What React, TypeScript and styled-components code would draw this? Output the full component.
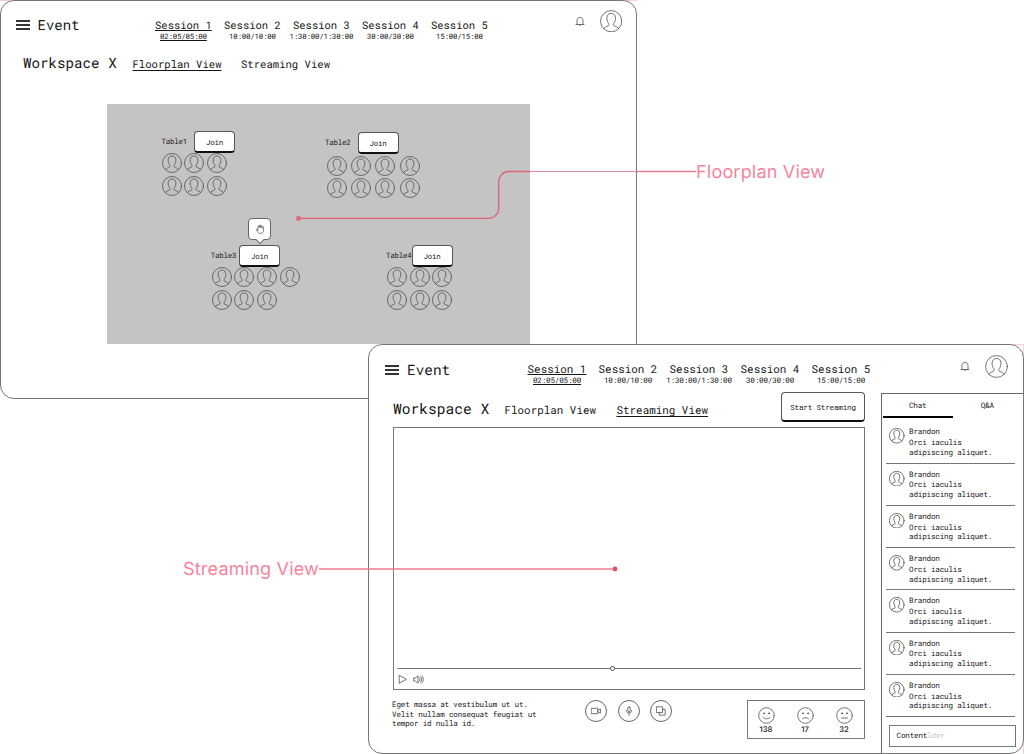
import React from "react";
import styled, { createGlobalStyle } from "styled-components";

const sessions = [
  { name: "Session 1", time: "02:05/05:00" },
  { name: "Session 2", time: "10:00/10:00" },
  { name: "Session 3", time: "1:30:00/1:30:00" },
  { name: "Session 4", time: "30:00/30:00" },
  { name: "Session 5", time: "15:00/15:00" },
];

const tables = [
  { name: "Table1", x: 54.5, y: 27, join: 7, people: [3, 3], gap: 2.7, rowGap: 3, top: 0, left: 0 },
  { name: "Table2", x: 218, y: 27.5, join: 7, people: [4, 4], gap: 4.4, rowGap: 2.2, top: 2, left: 1.5 },
  { name: "Table3", x: 103.7, y: 141, join: 2.8, people: [4, 3], gap: 2.7, rowGap: 3, top: 0, left: 1, hand: true },
  { name: "Table4", x: 279, y: 141, join: 0, people: [3, 3], gap: 2.7, rowGap: 3, top: 0, left: 1 },
];

const messages = [1, 2, 3, 4, 5, 6, 7];

function Avatar({ size }: { size: number }) {
  return (
    <Icon width={size} height={size} viewBox="0 0 24 24" strokeWidth={19 / size}>
      <circle cx="12" cy="12" r="11.4" />
      <path d="M3.9 20c1-1.7 3.300-2.200 5-3 1.200-.6.9-1.700.2-2.800-1.200-1.800-1.900-3.700-1.700-6C7.600 5.100 9.500 3.600 12 3.600s4.400 1.500 4.600 4.600c.2 2.300-.5 4.200-1.700 6-.7 1.100-1 2.200.2 2.800 1.700.8 4 1.300 5 3" />
    </Icon>
  );
}

function Header({ big }: { big?: boolean }) {
  return (
    <HeaderBar $big={big}>
      <Burger>
        <i />
        <i />
        <i />
      </Burger>
      <EventTitle $big={big}>Event</EventTitle>
      <SessionList $big={big}>
        {sessions.map((session, idx) => (
          <Session key={session.name} $active={idx === 0} $big={big}>
            <span>{session.name}</span>
            <small>{session.time}</small>
          </Session>
        ))}
      </SessionList>
      <BellBox>
        <Icon width="10" height="11" viewBox="0 0 10 11" strokeWidth="0.8">
          <path d="M1 8.500h8M2 8.300V4.600C2 2.700 3.200 1.300 5 1.300s3 1.400 3 3.300v3.700M4 8.800c.2 1 1.800 1 2 0" />
        </Icon>
      </BellBox>
      <Avatar size={big ? 23 : 22.4} />
    </HeaderBar>
  );
}

function FloorplanFrame() {
  return (
    <FloorFrame>
      <Header />
      <Views>
        <Workspace>Workspace X</Workspace>
        <View $active>Floorplan View</View>
        <View>Streaming View</View>
      </Views>
      <Floor>
        {tables.map((table) => (
          <Table key={table.name} style={{ left: table.x, top: table.y }}>
            <TableHead $gap={table.join}>
              {table.name}
              <Join>
                Join
                {table.hand && (
                  <HandBubble>
                    <Icon width="10" height="10" viewBox="0 0 24 24" strokeWidth="1.8">
                      <path d="M7 14.500V6.300a1.700 1.700 0 0 1 3.400 0V4.200a1.700 1.700 0 0 1 3.400 0v1.600a1.700 1.700 0 0 1 3.400 0v2.400a1.700 1.700 0 0 1 3.400 0V15c0 5-2.800 7.500-7.300 7.500-4 0-5.800-1.500-7.600-4.500L3.200 14.200c-.7-1.500 1-2.500 2.100-1.600L7 14.500M10.400 6.300v2.200M13.800 5.800v2.700M17.200 8.200v1.600" />
                    </Icon>
                  </HandBubble>
                )}
              </Join>
            </TableHead>
            <Seats style={{ gap: table.rowGap, marginTop: table.top, marginLeft: table.left }}>
              {table.people.map((count, row) => (
                <SeatRow key={row} style={{ gap: table.gap }}>
                  {Array.from({ length: count }, (_, i) => (
                    <Avatar key={i} size={20} />
                  ))}
                </SeatRow>
              ))}
            </Seats>
          </Table>
        ))}
      </Floor>
    </FloorFrame>
  );
}

function Face({ mouth, count }: { mouth: string; count: number }) {
  return (
    <Reaction>
      <Icon width="17" height="17" viewBox="0 0 17 17" strokeWidth="0.8">
        <circle cx="8.500" cy="8.500" r="7.800" />
        <path d={mouth} />
        <circle cx="6" cy="6.300" r="0.500" fill="#222" />
        <circle cx="11" cy="6.300" r="0.500" fill="#222" />
      </Icon>
      {count}
    </Reaction>
  );
}

function Chat() {
  return (
    <ChatPanel>
      <Tabs>
        <Tab $active>Chat</Tab>
        <Tab>Q&amp;A</Tab>
      </Tabs>
      {messages.map((id) => (
        <Message key={id}>
          <Avatar size={15.5} />
          <div>
            <Name>Brandon</Name>
            <p>
              Orci iaculis
              <br />
              adipiscing aliquet.
            </p>
          </div>
        </Message>
      ))}
      <ChatInput>
        Content<em>lder</em>
      </ChatInput>
    </ChatPanel>
  );
}

function StreamingFrame() {
  return (
    <StreamFrame>
      <Header big />
      <StreamBody>
        <Main>
          <StreamViews>
            <Workspace $big>Workspace X</Workspace>
            <View $big>Floorplan View</View>
            <View $big $active>
              Streaming View
            </View>
            <StartButton>Start Streaming</StartButton>
          </StreamViews>
          <Player>
            <Track>
              <Knob />
            </Track>
            <Controls>
              <Icon width="9" height="9" viewBox="0 0 9 9" strokeWidth="0.8">
                <path d="M1.200.7v7.600L8 4.500z" />
              </Icon>
              <Icon width="11" height="9" viewBox="0 0 11 9" strokeWidth="0.8">
                <path d="M.7 3v3h1.600L5 8.200V.8L2.300 3zM6.500 2.800c.8 1 .8 2.400 0 3.400M7.700 1.800c1.400 1.600 1.400 3.800 0 5.400M9 .9c1.900 2.200 1.900 5 0 7.200" />
              </Icon>
            </Controls>
          </Player>
          <Footer>
            <Description>
              Eget massa at vestibulum ut ut.
              <br />
              Velit nullam consequat feugiat ut
              <br />
              tempor id nulla id.
            </Description>
            <Devices>
              <RoundButton>
                <Icon width="10" height="10" viewBox="0 0 10 10" strokeWidth="0.8">
                  <path d="M.6 2.300h6.200v5.400H.6zM6.800 4.200l2.600-1.400v4.400L6.800 5.800" />
                </Icon>
              </RoundButton>
              <RoundButton>
                <Icon width="10" height="10" viewBox="0 0 10 10" strokeWidth="0.8">
                  <rect x="3.800" y="0.800" width="2.400" height="5" rx="1.200" />
                  <path d="M2.300 4.500c0 3.500 5.400 3.500 5.400 0M5 7.200v2.200" />
                </Icon>
              </RoundButton>
              <RoundButton>
                <Icon width="10" height="10" viewBox="0 0 10 10" strokeWidth="0.8">
                  <path d="M.8.8h5.800v5.800H.8zM6.600 3.300h2.600v5.900H3.300V6.600" />
                </Icon>
              </RoundButton>
            </Devices>
            <Reactions>
              <Face mouth="M5 10.200c1.200 2.200 5.800 2.200 7 0" count={138} />
              <Face mouth="M5.500 11.800c1.500-1.500 4.500-1.500 6 0" count={17} />
              <Face mouth="M5.500 11h6" count={32} />
            </Reactions>
          </Footer>
        </Main>
        <Chat />
      </StreamBody>
    </StreamFrame>
  );
}

function App() {
  return (
    <>
      <GlobalStyle />
      <Board>
        <FloorplanFrame />
        <StreamingFrame />
        <FloorNote>
          <svg width="401" height="54" viewBox="0 0 401 54" fill="none">
            <path d="M3.500 48.300H193.700a10 10 0 0 0 10-10V11.500a10 10 0 0 1 10-10H235" stroke="#df6279" strokeWidth="1.300" />
            <path d="M235 1.500H342" stroke="#e28a9b" />
            <path d="M342 1.500H401" stroke="#f07a93" strokeWidth="1.300" />
            <circle cx="3.500" cy="48.300" r="2.600" fill="#df6e83" />
          </svg>
          <NoteText>Floorplan View</NoteText>
        </FloorNote>
        <StreamNote>
          <NoteText>Streaming View</NoteText>
          <svg width="300" height="6" viewBox="0 0 300 6" fill="none">
            <path d="M0 3H296" stroke="#f07a93" strokeWidth="1.300" />
            <circle cx="296" cy="3" r="2.400" fill="#d94f6a" />
          </svg>
        </StreamNote>
      </Board>
    </>
  );
}

export default App;

const GlobalStyle = createGlobalStyle`
  * {
    box-sizing: border-box;
  }
  body {
    margin: 0;
    background: #fff;
    color: #161616;
    font-family: "Roboto Mono", "DejaVu Sans Mono", monospace;
    text-rendering: geometricPrecision;
  }
  p {
    margin: 0;
  }
`;
// pink corners show up behind the rounded frames
const Board = styled.div`
  position: relative;
  width: 1024px;
  height: 754px;
  overflow: hidden;
  background:
    linear-gradient(#ffccd5, #ffccd5) 0 0 / 12px 1px no-repeat,
    linear-gradient(#ffccd5, #ffccd5) 625px 0 / 12px 1px no-repeat,
    linear-gradient(#ffccd5, #ffccd5) 1012px 344px / 12px 1px no-repeat,
    linear-gradient(#ffccd5, #ffccd5) 1023px 344px / 1px 12px no-repeat,
    linear-gradient(#ffccd5, #ffccd5) 1023px 742px / 1px 12px no-repeat,
    #fff;
`;
const Icon = styled.svg`
  display: block;
  flex: none;
  fill: none;
  stroke: #505050;
  stroke-linecap: round;
  stroke-linejoin: round;
`;
const Frame = styled.section`
  position: absolute;
  background: #fff;
  border: 1px solid #777;
  border-radius: 14px;
  display: flex;
  flex-direction: column;
`;
const FloorFrame = styled(Frame)`
  left: 0;
  top: 0;
  width: 637px;
  height: 399px;
`;
const StreamFrame = styled(Frame)`
  left: 368px;
  top: 344px;
  width: 656px;
  height: 410px;
  overflow: hidden;
`;
const HeaderBar = styled.header<{ $big?: boolean }>`
  display: flex;
  align-items: center;
  flex: none;
  height: ${(p) => (p.$big ? 48 : 46)}px;
  padding: 0 ${(p) => (p.$big ? 15 : 14)}px 6px ${(p) => (p.$big ? 16 : 15)}px;
`;
const Burger = styled.div`
  display: flex;
  flex-direction: column;
  gap: 2px;
  width: 14px;
  padding-top: 8px;
  i {
    height: 2px;
    background: #333;
  }
`;
const EventTitle = styled.h1<{ $big?: boolean }>`
  width: ${(p) => (p.$big ? 120.5 : 117.5)}px;
  margin: 0 0 0 ${(p) => (p.$big ? 8 : 7.5)}px;
  padding-top: 6px;
  font-size: ${(p) => (p.$big ? 14.4 : 14)}px;
  font-weight: 400;
`;
const SessionList = styled.nav<{ $big?: boolean }>`
  display: flex;
  gap: ${(p) => (p.$big ? 12 : 12.2)}px;
`;
const Session = styled.div<{ $active?: boolean; $big?: boolean }>`
  display: flex;
  flex-direction: column;
  align-items: center;
  width: ${(p) => (p.$big ? 59 : 56.8)}px;
  padding-top: ${(p) => (p.$big ? 17 : 18)}px;
  white-space: nowrap;
  text-decoration: ${(p) => (p.$active ? "underline" : "none")};
  text-underline-offset: 1px;
  font-size: ${(p) => (p.$big ? 10.9 : 10.5)}px;
  line-height: 13px;
  small {
    font-size: ${(p) => (p.$big ? 7.6 : 7.4)}px;
    letter-spacing: -0.18px;
    line-height: 10px;
  }
`;
const BellBox = styled.div`
  margin-left: auto;
  margin-right: 15px;
`;
const Views = styled.nav`
  display: flex;
  align-items: center;
  height: 34px;
  padding-left: 22px;
`;
const Workspace = styled.h2<{ $big?: boolean }>`
  width: ${(p) => (p.$big ? 111.5 : 109.5)}px;
  margin: 0;
  padding-bottom: ${(p) => (p.$big ? 4 : 3)}px;
  font-size: ${(p) => (p.$big ? 14.6 : 14.2)}px;
  font-weight: 400;
  white-space: nowrap;
`;
const View = styled.a<{ $active?: boolean; $big?: boolean }>`
  margin-right: ${(p) => (p.$big ? 20.5 : 19.5)}px;
  font-size: ${(p) => (p.$big ? 10.9 : 10.6)}px;
  text-decoration: ${(p) => (p.$active ? "underline" : "none")};
  text-underline-offset: 1.5px;
  white-space: nowrap;
`;
const Floor = styled.div`
  position: relative;
  width: 423px;
  height: 240px;
  margin: 23px 0 0 106px;
  background: #c4c4c4;
`;
const Table = styled.div`
  position: absolute;
  font-size: 7.4px;
  letter-spacing: -0.18px;
`;
const TableHead = styled.div<{ $gap: number }>`
  display: flex;
  align-items: center;
  gap: ${(p) => p.$gap}px;
`;
const Join = styled.button`
  position: relative;
  width: 41px;
  height: 22px;
  padding: 1px 0 0;
  border: 1px solid #555;
  border-bottom: 2px solid #111;
  border-radius: 4px;
  background: #fff;
  color: #161616;
  font: inherit;
  letter-spacing: inherit;
`;
const HandBubble = styled.span`
  position: absolute;
  left: 8px;
  bottom: 25px;
  display: flex;
  align-items: center;
  justify-content: center;
  width: 23px;
  height: 22px;
  border: 1px solid #666;
  border-radius: 4px;
  background: #fff;
  &::after {
    content: "";
    position: absolute;
    bottom: -4px;
    width: 5px;
    height: 5px;
    border: solid #666;
    border-width: 0 1px 1px 0;
    background: #fff;
    transform: rotate(45deg);
  }
`;
const Seats = styled.div`
  display: flex;
  flex-direction: column;
`;
const SeatRow = styled.div`
  display: flex;
`;
const StreamBody = styled.div`
  display: flex;
  flex: 1;
`;
const Main = styled.main`
  width: 512px;
  padding: 0 16px 0 24px;
`;
const StreamViews = styled.nav`
  display: flex;
  align-items: center;
  height: 34px;
`;
const StartButton = styled.button`
  width: 84px;
  height: 30px;
  margin: -6px 0 0 auto;
  padding: 0;
  border: 1px solid #555;
  border-bottom: 2px solid #111;
  border-radius: 4px;
  background: #fff;
  color: #161616;
  font: 7.6px "Roboto Mono", "DejaVu Sans Mono", monospace;
  letter-spacing: -0.18px;
  white-space: nowrap;
`;
const Player = styled.div`
  display: flex;
  flex-direction: column;
  justify-content: flex-end;
  height: 263px;
  border: 1px solid #777;
`;
const Track = styled.div`
  display: flex;
  align-items: center;
  height: 1px;
  margin: 0 3px;
  background: #777;
`;
const Knob = styled.span`
  width: 5px;
  height: 5px;
  margin-left: 213px;
  border: 1px solid #555;
  border-radius: 50%;
  background: #fff;
`;
const Controls = styled.div`
  display: flex;
  gap: 6px;
  padding: 6px 0 5px 4px;
`;
const Footer = styled.footer`
  display: flex;
  padding-top: 10px;
`;
const Description = styled.p`
  width: 193px;
  margin-left: -1px;
  padding-top: 1px;
  font-size: 7.6px;
  letter-spacing: -0.18px;
  line-height: 9.6px;
`;
const Devices = styled.div`
  display: flex;
  gap: 10.7px;
`;
const RoundButton = styled.button`
  display: flex;
  align-items: center;
  justify-content: center;
  width: 22px;
  height: 22px;
  padding: 0;
  border: 1px solid #666;
  border-radius: 50%;
  background: #fff;
`;
const Reactions = styled.div`
  display: flex;
  justify-content: center;
  gap: 19px;
  width: 118px;
  height: 39px;
  margin-left: auto;
  padding: 6px 2px 0 0;
  border: 1px solid #777;
`;
const Reaction = styled.div`
  display: flex;
  flex-direction: column;
  align-items: center;
  gap: 1px;
  width: 20px;
  font: 500 7.7px/10px Inter, sans-serif;
`;
const ChatPanel = styled.aside`
  display: flex;
  flex-direction: column;
  flex: 1;
  border: solid #666;
  border-width: 1px 0 0 1px;
  font-size: 7.6px;
  letter-spacing: -0.18px;
`;
const Tabs = styled.div`
  display: flex;
  flex: none;
  height: 24px;
  margin-bottom: 3.4px;
  padding-left: 1px;
`;
const Tab = styled.div<{ $active?: boolean }>`
  width: 69.5px;
  border-bottom: 2px solid ${(p) => (p.$active ? "#000" : "transparent")};
  line-height: 25px;
  text-align: center;
`;
const Message = styled.div`
  display: flex;
  flex: none;
  gap: 4.5px;
  height: 42.25px;
  margin: 0 8px 0 4px;
  padding: 7px 0 0 3px;
  border-bottom: 1px solid #777;
  line-height: 9.7px;
`;
const Name = styled.p`
  margin-bottom: 1px;
`;
const ChatInput = styled.div`
  width: 127px;
  height: 22px;
  margin: 7.4px 0 0 7px;
  padding-left: 6.5px;
  border: 1px solid #777;
  line-height: 21px;
  em {
    color: #c4c4c4;
    font-style: normal;
  }
`;
const Note = styled.div`
  position: absolute;
  display: flex;
`;
const FloorNote = styled(Note)`
  left: 295px;
  top: 170px;
  span {
    margin-top: -8.5px;
  }
`;
const StreamNote = styled(Note)`
  left: 183px;
  top: 558px;
  align-items: center;
  span {
    padding-top: 1px;
    line-height: 21px;
  }
`;
const NoteText = styled.span`
  color: #f5849b;
  font: 400 18px/22px Inter, sans-serif;
  letter-spacing: 0.2px;
  white-space: nowrap;
`;
